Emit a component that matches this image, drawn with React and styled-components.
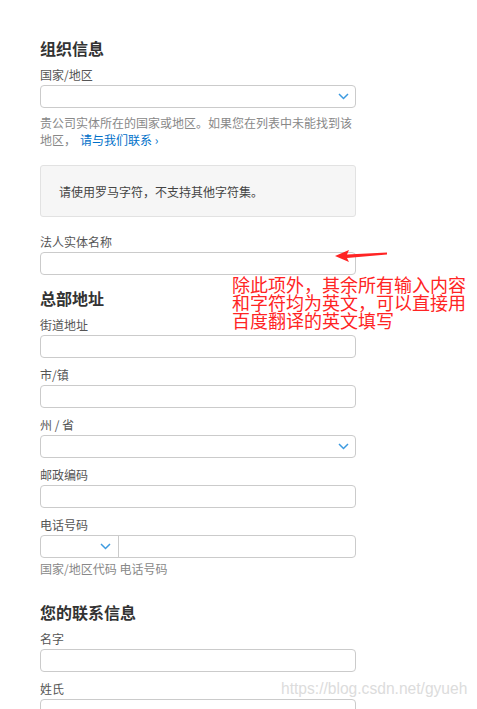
import React from 'react';
import styled, { createGlobalStyle } from 'styled-components';

const GlobalStyle = createGlobalStyle`
  body {
    margin: 0;
    background: #fff;
    font-family: "Noto Sans CJK SC", "Liberation Sans", sans-serif;
  }
`;

const Page = styled.div`
  position: relative;
  width: 477px;
  min-height: 709px;
  padding: 37px 0 0 40px;
  box-sizing: border-box;
  overflow: hidden;
`;

const Form = styled.div`
  width: 316px;
  display: flex;
  flex-direction: column;
`;

const Heading = styled.h2`
  margin: ${(p) => p.$top || 0}px 0 8px;
  font-size: 16px;
  line-height: 22px;
  font-weight: 700;
  color: #333;
`;

const Field = styled.div`
  display: flex;
  flex-direction: column;
  gap: 2px;
  margin-bottom: ${(p) => (p.$mb !== undefined ? p.$mb : 9)}px;
`;

const Label = styled.label`
  font-size: 12px;
  line-height: 16px;
  color: #555;
`;

const TextBox = styled.div`
  height: 23px;
  border: 1px solid #cbcbcb;
  border-radius: 4px;
  box-sizing: border-box;
  background: #fff;
`;

const SelectBox = styled(TextBox)`
  display: flex;
  align-items: center;
  justify-content: flex-end;
  padding-right: 6px;
`;

const PhoneRow = styled(TextBox)`
  display: grid;
  grid-template-columns: 78px 1fr;
`;

const PhoneCode = styled.div`
  display: flex;
  align-items: center;
  justify-content: flex-end;
  padding-right: 7px;
  border-right: 1px solid #cbcbcb;
`;

const Help = styled.p`
  margin: ${(p) => p.$top || 0}px 0 0;
  font-size: 12px;
  line-height: 17px;
  color: #888;
`;

const Link = styled.a`
  color: #0070c9;
  text-decoration: none;
  margin-left: 4px;
`;

const Note = styled.div`
  margin: 17px 0 17px;
  height: 52px;
  box-sizing: border-box;
  padding: 0 18px;
  display: flex;
  align-items: center;
  background: #f6f6f6;
  border: 1px solid #e2e2e2;
  border-radius: 3px;
  font-size: 12px;
  color: #444;
`;

const Annotation = styled.div`
  position: absolute;
  left: 232px;
  top: 275px;
  width: 245px;
  font-size: 18px;
  line-height: 18px;
  color: #ff2424;
`;

const Arrow = styled.svg`
  position: absolute;
  left: 330px;
  top: 246px;
`;

const Watermark = styled.div`
  position: absolute;
  left: 281px;
  top: 680px;
  font-family: "Liberation Sans", Arial, sans-serif;
  font-size: 15.6px;
  color: #dcdcdc;
`;

const Chevron = () => (
  <svg width="11" height="7" viewBox="0 0 11 7">
    <polyline points="1,1 5.5,5.5 10,1" fill="none" stroke="#3d9be0" strokeWidth="1.5" />
  </svg>
);

export default function App() {
  return (
    <>
      <GlobalStyle />
      <Page>
        <Form>
          <Heading>组织信息</Heading>
          <Field $mb={0}>
            <Label>国家/地区</Label>
            <SelectBox>
              <Chevron />
            </SelectBox>
          </Field>
          <Help $top={6}>
            贵公司实体所在的国家或地区。如果您在列表中未能找到该地区，
            <Link>请与我们联系 ›</Link>
          </Help>
          <Note>请使用罗马字符，不支持其他字符集。</Note>
          <Field>
            <Label>法人实体名称</Label>
            <TextBox />
          </Field>

          <Heading $top={3}>总部地址</Heading>
          <Field>
            <Label>街道地址</Label>
            <TextBox />
          </Field>
          <Field>
            <Label>市/镇</Label>
            <TextBox />
          </Field>
          <Field $mb={9}>
            <Label>州 / 省</Label>
            <SelectBox>
              <Chevron />
            </SelectBox>
          </Field>
          <Field>
            <Label>邮政编码</Label>
            <TextBox />
          </Field>
          <Field $mb={0}>
            <Label>电话号码</Label>
            <PhoneRow>
              <PhoneCode>
                <Chevron />
              </PhoneCode>
              <div />
            </PhoneRow>
          </Field>
          <Help $top={2}>国家/地区代码 电话号码</Help>

          <Heading $top={24}>您的联系信息</Heading>
          <Field>
            <Label>名字</Label>
            <TextBox />
          </Field>
          <Field>
            <Label>姓氏</Label>
            <TextBox />
          </Field>
        </Form>

        <Arrow width="60" height="20" viewBox="0 0 60 20">
          <polygon points="5,10 19,4 17,8.5 57,6.5 57,8.5 17,12 19,16" fill="#ff2424" />
        </Arrow>
        <Annotation>
          除此项外，其余所有输入内容
          <br />
          和字符均为英文，可以直接用
          <br />
          百度翻译的英文填写
        </Annotation>
        <Watermark>https://blog.csdn.net/gyueh</Watermark>
      </Page>
    </>
  );
}
